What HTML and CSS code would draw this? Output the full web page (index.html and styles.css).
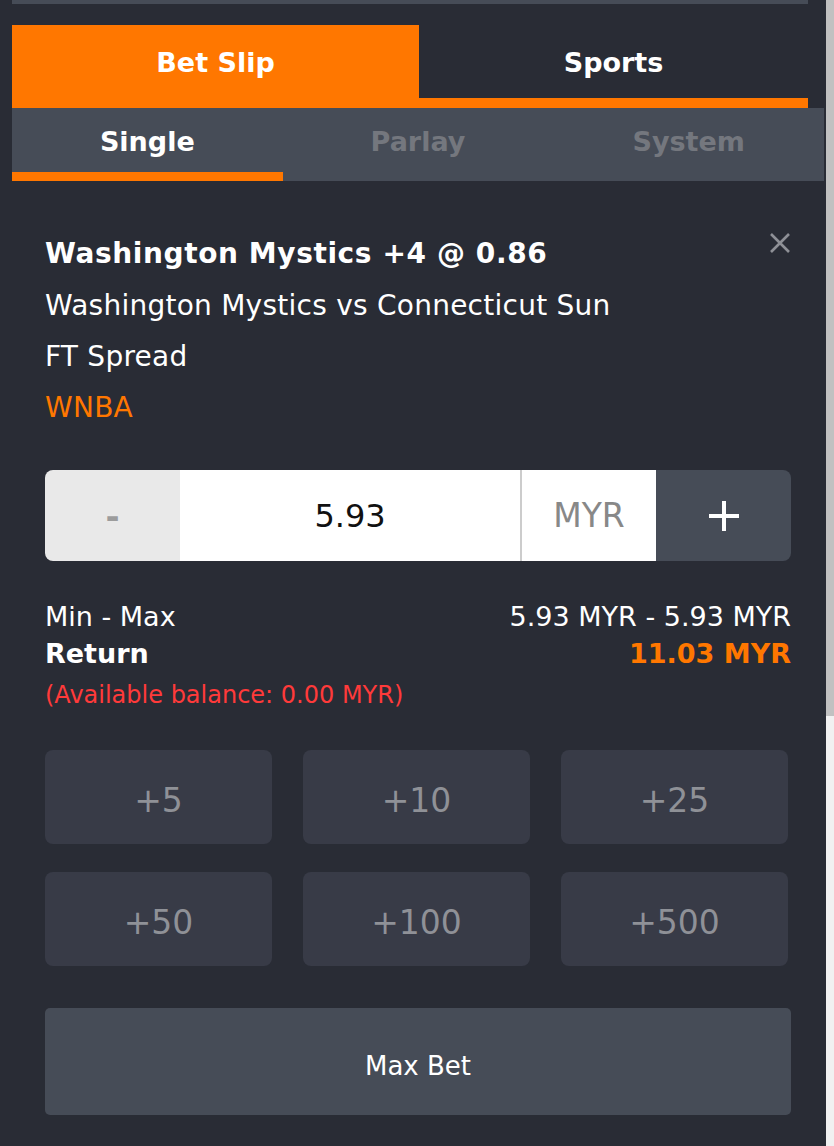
FILE: index.html
```html
<!DOCTYPE html>
<html lang="en">
<head>
<meta charset="utf-8">
<title>Bet Slip</title>
<link rel="stylesheet" href="styles.css">
</head>
<body>
<div class="panel">
  <div class="topline"></div>
  <nav class="main-tabs">
    <div class="main-tab active">Bet Slip</div>
    <div class="main-tab sports">Sports</div>
  </nav>
  <nav class="sub-tabs">
    <div class="sub-tab active">Single</div>
    <div class="sub-tab">Parlay</div>
    <div class="sub-tab">System</div>
  </nav>
  <section class="slip">
    <div class="bet-head">
      <div class="bet-info">
        <div class="bet-title">Washington Mystics +4 @ 0.86</div>
        <div class="bet-line">Washington Mystics vs Connecticut Sun</div>
        <div class="bet-line">FT Spread</div>
        <div class="bet-line league">WNBA</div>
      </div>
      <button class="close" aria-label="Remove">
        <svg width="22" height="22" viewBox="0 0 22 22"><path d="M2 2 L20 20 M20 2 L2 20" stroke="#8e9096" stroke-width="2.6" fill="none"/></svg>
      </button>
    </div>

    <div class="stake">
      <div class="step minus">-</div>
      <div class="amount">5.93</div>
      <div class="currency">MYR</div>
      <div class="step plus">
        <svg width="34" height="34" viewBox="0 0 34 34"><path d="M17 2 V32 M2 17 H32" stroke="#ffffff" stroke-width="4" fill="none"/></svg>
      </div>
    </div>

    <div class="summary">
      <div class="row"><span>Min - Max</span><span>5.93 MYR - 5.93 MYR</span></div>
      <div class="row bold"><span>Return</span><span class="ret">11.03 MYR</span></div>
      <div class="balance">(Available balance: 0.00 MYR)</div>
    </div>

    <div class="quick">
      <button class="qbtn">+5</button>
      <button class="qbtn">+10</button>
      <button class="qbtn">+25</button>
      <button class="qbtn">+50</button>
      <button class="qbtn">+100</button>
      <button class="qbtn">+500</button>
    </div>

    <button class="maxbet">Max Bet</button>
  </section>
</div>
<div class="scrollbar" aria-hidden="true"><div class="thumb"></div></div>
</body>
</html>
```

FILE: styles.css
```css
body {
  margin: 0;
  background: #292c35;
  font-family: "DejaVu Sans", sans-serif;
  color: #ffffff;
  overflow: hidden;
}

.scrollbar {
  position: fixed;
  top: 0;
  right: 0;
  width: 8px;
  height: 100vh;
  background: #f1f1f1;
}

.thumb {
  height: 716px;
  background: #c1c1c1;
}

.panel {
  margin: 0 10px 0 12px;
  padding-bottom: 60px;
}

.topline {
  height: 4px;
  background: #464c57;
  margin-right: 16px;
}

.main-tabs {
  display: flex;
  margin-top: 21px;
  margin-right: 16px;
  border-bottom: 10px solid #ff7700;
}

.main-tab {
  height: 73px;
  display: flex;
  align-items: center;
  justify-content: center;
  font-weight: bold;
  font-size: 27px;
  padding-top: 2px;
  box-sizing: border-box;
}

.main-tab.active {
  flex: 407;
  background: #ff7700;
}

.main-tab.sports {
  flex: 389;
}

.sub-tabs {
  display: flex;
  background: #464c57;
}

.sub-tab {
  flex: 1;
  height: 62px;
  display: flex;
  align-items: center;
  justify-content: center;
  font-weight: bold;
  font-size: 27px;
  color: #74777e;
  border-bottom: 9px solid transparent;
  padding-top: 2px;
}

.sub-tab.active {
  color: #ffffff;
  border-bottom-color: #ff7700;
}

.slip {
  padding: 47px 33px 0 33px;
}

.bet-head {
  display: flex;
  justify-content: space-between;
  align-items: flex-start;
}

.bet-title {
  font-weight: bold;
  font-size: 28px;
  letter-spacing: 0.6px;
  line-height: 52px;
}

.bet-line {
  font-size: 28px;
  letter-spacing: 0.25px;
  line-height: 51px;
}

.league {
  color: #ff7700;
}

.close {
  background: none;
  border: 0;
  padding: 0;
  margin: 4px 0 0 0;
  width: 22px;
  height: 22px;
  cursor: pointer;
}

.stake {
  display: flex;
  margin-top: 37px;
  height: 91px;
  border-radius: 8px;
  overflow: hidden;
}

.step {
  width: 135px;
  display: flex;
  align-items: center;
  justify-content: center;
}

.minus {
  background: #e9e9e9;
  color: #9c9c9c;
  font-size: 34px;
  font-weight: bold;
}

.plus {
  background: #464c57;
}

.amount {
  flex: 1;
  background: #ffffff;
  color: #111111;
  font-size: 32px;
  display: flex;
  align-items: center;
  justify-content: center;
  border-right: 2px solid #cccccc;
}

.currency {
  width: 134px;
  background: #ffffff;
  color: #888888;
  font-size: 33px;
  display: flex;
  align-items: center;
  justify-content: center;
}

.summary {
  margin-top: 37px;
  font-size: 27px;
}

.row {
  display: flex;
  justify-content: space-between;
  line-height: 37px;
}

.row.bold {
  font-weight: bold;
}

.ret {
  color: #ff7700;
}

.balance {
  color: #ff3a3a;
  font-size: 24px;
  line-height: 41px;
  padding-top: 3px;
}

.quick {
  margin-top: 34px;
  display: grid;
  grid-template-columns: repeat(3, 1fr);
  column-gap: 31px;
  row-gap: 28px;
  padding-right: 3px;
}

.qbtn {
  height: 94px;
  padding-top: 8px;
  background: #383b47;
  border: 0;
  border-radius: 8px;
  color: #8f9197;
  font-family: inherit;
  font-size: 33px;
}

.maxbet {
  display: block;
  width: 100%;
  margin-top: 42px;
  height: 107px;
  background: #464c57;
  border: 0;
  border-radius: 5px;
  color: #ffffff;
  font-family: inherit;
  font-size: 26px;
  padding-top: 10px;
}
```
